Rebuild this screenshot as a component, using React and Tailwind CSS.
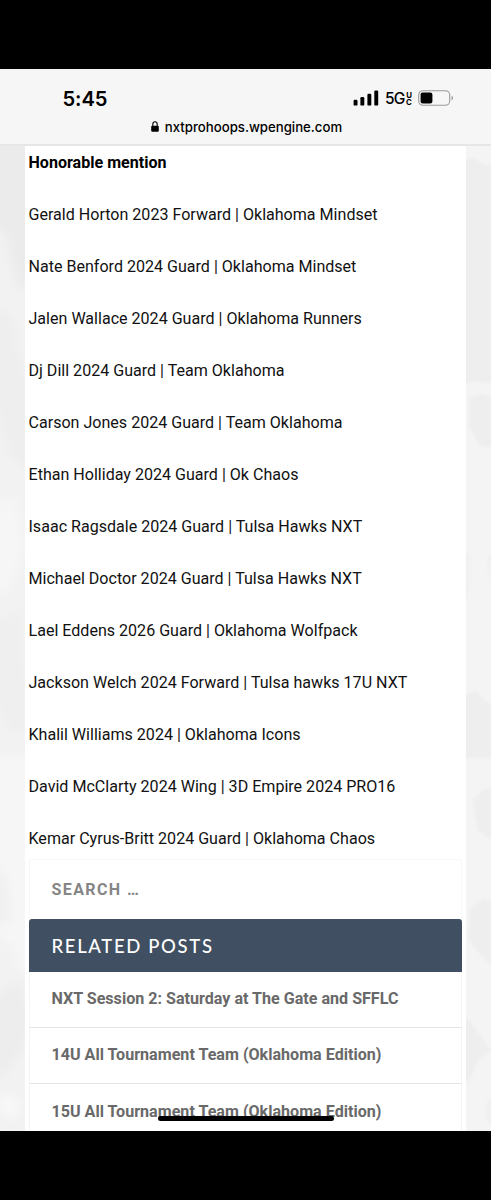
import React from "react";

const players = [
  "Gerald Horton 2023 Forward | Oklahoma Mindset",
  "Nate Benford 2024 Guard | Oklahoma Mindset",
  "Jalen Wallace 2024 Guard | Oklahoma Runners",
  "Dj Dill 2024 Guard | Team Oklahoma",
  "Carson Jones 2024 Guard | Team Oklahoma",
  "Ethan Holliday 2024 Guard | Ok Chaos",
  "Isaac Ragsdale 2024 Guard | Tulsa Hawks NXT",
  "Michael Doctor 2024 Guard | Tulsa Hawks NXT",
  "Lael Eddens 2026 Guard | Oklahoma Wolfpack",
  "Jackson Welch 2024 Forward | Tulsa hawks 17U NXT",
  "Khalil Williams 2024 | Oklahoma Icons",
  "David McClarty 2024 Wing | 3D Empire 2024 PRO16",
  "Kemar Cyrus-Britt 2024 Guard | Oklahoma Chaos",
];

const posts = [
  "NXT Session 2: Saturday at The Gate and SFFLC",
  "14U All Tournament Team (Oklahoma Edition)",
  "15U All Tournament Team (Oklahoma Edition)",
];

function StatusBar() {
  return (
    <header className="h-[77px] shrink-0 border-b-2 border-[#e6e6e6] bg-[#f6f6f6] font-['Inter',sans-serif] text-black">
      <div className="flex h-[58px] items-center justify-between pl-[62.5px] pr-[37px] pt-px">
        <time className="text-[20.2px] font-semibold leading-6 tracking-[-0.1px]">5:45</time>
        <div className="flex items-center">
          <svg className="mb-px" width="26" height="16" viewBox="0 0 26 16" aria-hidden="true">
            <rect x="0.6" y="9.8" width="3.9" height="5.8" rx="1.2" />
            <rect x="7.4" y="7" width="3.9" height="8.6" rx="1.2" />
            <rect x="14.4" y="3.8" width="3.9" height="11.8" rx="1.2" />
            <rect x="21.3" y="0.4" width="3.9" height="15.2" rx="1.2" />
          </svg>
          <span className="ml-[6px] pt-px text-[15.5px] font-medium leading-4 tracking-[-0.8px]">5G</span>
          <span className="ml-[1.5px] flex w-[6px] flex-col items-center pt-px text-[7.8px] font-bold leading-[7px]">
            <span className="h-[7px]">U</span>
            <span className="h-[7px]">C</span>
          </span>
          <svg className="mb-px ml-[6px]" width="36" height="16" viewBox="0 0 36 16" aria-hidden="true">
            <rect x="0.7" y="0.7" width="31" height="14.6" rx="4.3" fill="none" stroke="#9a9a9a" strokeWidth="1.1" />
            <rect x="2.6" y="2.4" width="11.8" height="11" rx="2.2" />
            <path d="M33.6 5.8c1.6.5 1.6 4.1 0 4.6z" fill="#888" />
          </svg>
        </div>
      </div>
      <div className="flex h-0 items-center justify-center pl-[2px]">
        <svg className="mb-px mr-[6px]" width="8" height="11" viewBox="0 0 8 11" aria-hidden="true">
          <rect x="0.2" y="4.7" width="7.6" height="6.1" rx="1.1" />
          <path d="M1.8 5V3.2a2.2 2.4 0 0 1 4.4 0V5" fill="none" stroke="#000" strokeWidth="1.1" />
        </svg>
        <span className="text-[13.2px] font-medium leading-4">nxtprohoops.wpengine.com</span>
      </div>
    </header>
  );
}

function LeftTexture() {
  return (
    <svg className="h-full w-[24.5px] shrink-0 bg-[#f2f2f2]" viewBox="0 0 24.5 985" preserveAspectRatio="none" aria-hidden="true">
      <defs>
        <filter id="softL" x="-50%" y="-20%" width="200%" height="140%"><feGaussianBlur stdDeviation="5" /></filter>
      </defs>
      <g filter="url(#softL)">
        <path d="M-10-20H45V120L20 145 14 125 6 90-10 75z" fill="#ebebeb" />
        <path d="M-5 160 12 170 20 215 35 240V330L10 310-5 260z" fill="#eeeeee" />
        <path d="M-5 360 15 350 24 400 8 450-5 440z" fill="#f6f6f6" />
        <path d="M-5 475 20 465 30 580 12 590-5 555z" fill="#efefef" />
        <path d="M-5 610H35V830L20 825 12 800-5 790z" fill="#f6f6f6" />
        <path d="M-5 720 8 735 10 775-5 780z" fill="#f0f0f0" />
        <path d="M-5 850 20 835 30 870 25 900 0 935-5 930z" fill="#ededed" />
        <ellipse cx="9" cy="960" rx="10" ry="12" fill="#f8f8f8" />
      </g>
    </svg>
  );
}

function RightTexture() {
  return (
    <svg className="h-full min-w-0 flex-1 bg-[#f4f4f4]" viewBox="0 0 24.5 985" preserveAspectRatio="none" aria-hidden="true">
      <defs>
        <filter id="softR" x="-50%" y="-20%" width="200%" height="140%"><feGaussianBlur stdDeviation="1.8" /></filter>
      </defs>
      <g filter="url(#softR)" fill="#eeeeee">
        <path d="M-5 15 8 12 20 20 30 12V238L12 235-5 238z" />
        <path d="M3 252 14 248 30 252V302L14 300 3 280z" />
        <path d="M-5 400 4 410 3 445-5 460zM30 402 21 412 22 430 30 438z" fill="#f0f0f0" />
        <path d="M-5 550 10 545 20 556 30 560V612H-5z" />
        <path d="M30 641 16 644 6 655 12 685 30 697z" />
        <path d="M30 760 18 752 4 762 2 794 14 808 30 826z" />
        <path d="M-5 865 6 878 24 904 12 914 2 937-5 930z" />
        <ellipse cx="25" cy="965" rx="6" ry="13" fill="#f0f0f0" />
      </g>
    </svg>
  );
}

function Article() {
  return (
    <article className="px-1 pt-[3.8px] text-[16.07px] leading-[26px] text-[#111]">
      <h2 className="h-[26px] font-bold text-black">Honorable mention</h2>
      {players.map((player) => (
        <p key={player} className="mt-[26px] h-[26.03px] whitespace-nowrap">
          {player}
        </p>
      ))}
    </article>
  );
}

function Sidebar() {
  return (
    <aside className="mx-1 mt-[7px] w-[433px] font-bold">
      <div className="flex h-[60px] items-center rounded-t-[3px] border border-b-0 border-[#f8f8f8] pl-[22px] pt-px text-[16px] tracking-[1.4px] text-[#858585]">
        SEARCH …
      </div>
      <section>
        <h2 className="flex h-[52.5px] items-center rounded-t-[3px] bg-[#405062] pl-[23px] pt-[4px] font-['Lato',sans-serif] text-[18.5px] font-medium tracking-[1.65px] text-white">
          RELATED POSTS
        </h2>
        <ul className="border-x border-[#f4f4f4] text-[16.1px] text-[#696969]">
          {posts.map((post) => (
            <li key={post} className="flex h-[56px] items-center whitespace-nowrap border-b border-[#e4e4e4] pl-[22px] pt-px last:border-b-0">
              {post}
            </li>
          ))}
        </ul>
      </section>
    </aside>
  );
}

export default function App() {
  return (
    <div className="flex h-[1200px] w-[491px] flex-col overflow-hidden bg-black pb-[69px] pt-[69px] font-['Roboto',sans-serif]">
      <div className="relative flex min-h-0 flex-1 flex-col overflow-hidden">
        <StatusBar />
        <div className="flex min-h-0 flex-1 overflow-hidden">
          <LeftTexture />
          <main className="w-[441.5px] shrink-0 bg-white">
            <Article />
            <Sidebar />
          </main>
          <RightTexture />
        </div>
        <div className="absolute bottom-[10px] left-[158px] h-[5px] w-[176px] rounded-full bg-black" />
      </div>
    </div>
  );
}
